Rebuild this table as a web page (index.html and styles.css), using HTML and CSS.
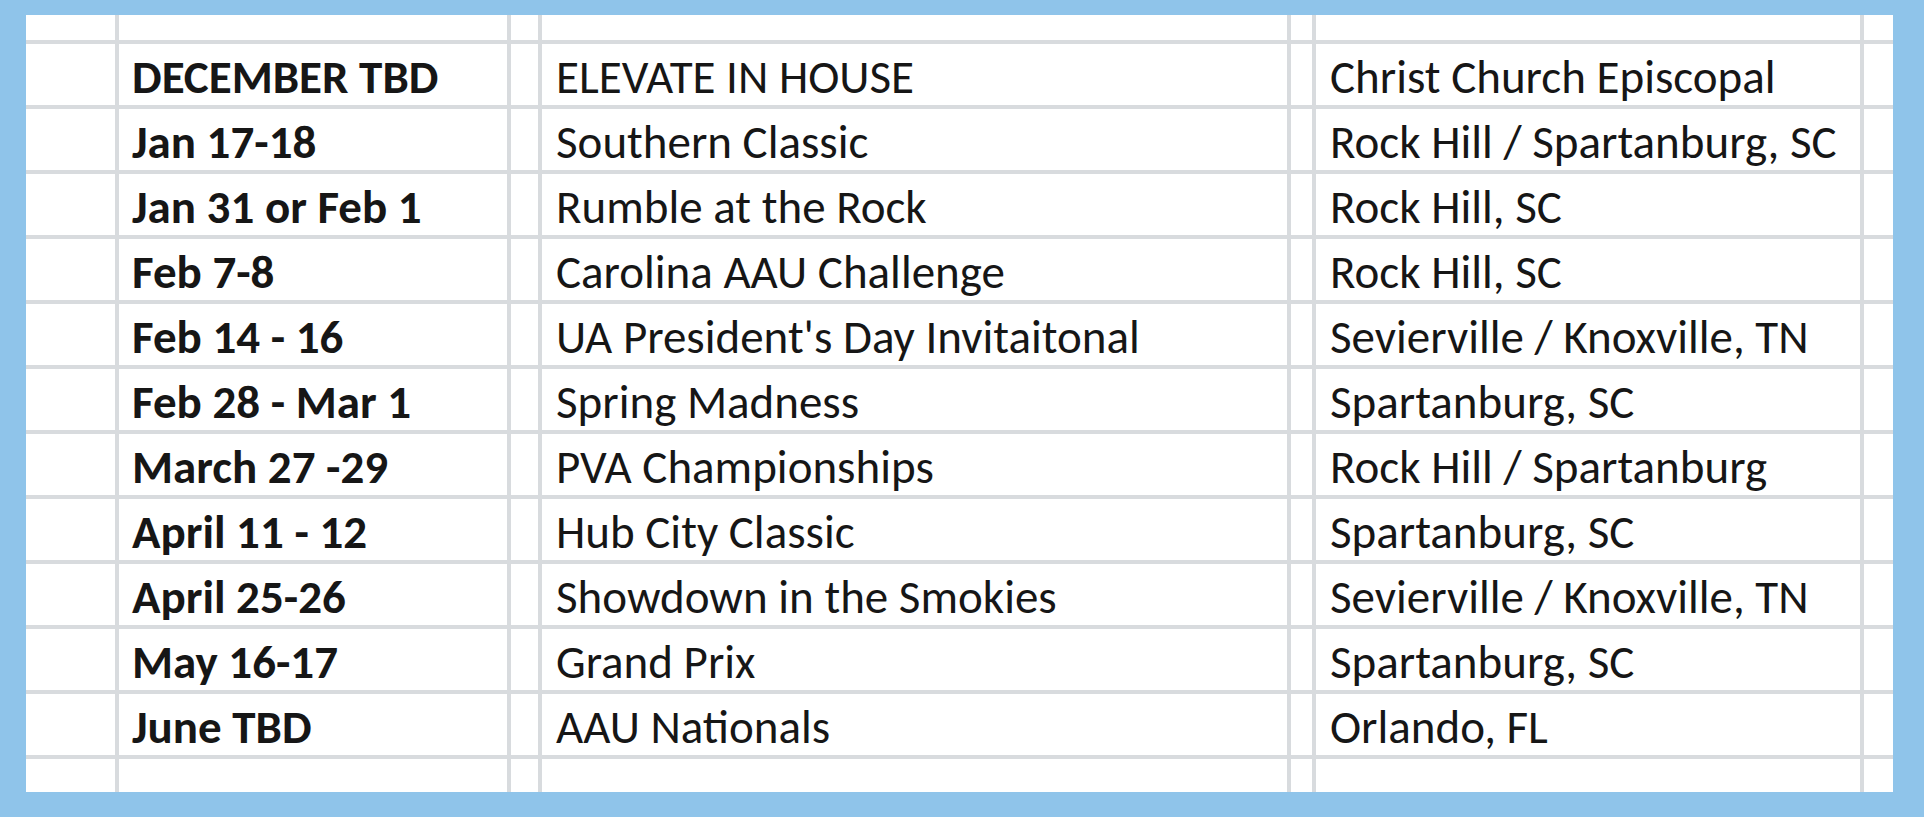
FILE: index.html
```html
<!DOCTYPE html>
<html>
<head>
<meta charset="utf-8">
<link rel="stylesheet" href="styles.css">
</head>
<body>
<div class="frame">
  <div class="sheet">
    <div class="c"></div><div class="c"></div><div class="c"></div><div class="c"></div><div class="c"></div><div class="c"></div><div class="c"></div>

    <div class="c"></div><div class="c date">DECEMBER TBD</div><div class="c"></div><div class="c txt">ELEVATE IN HOUSE</div><div class="c"></div><div class="c txt">Christ Church Episcopal</div><div class="c"></div>
    <div class="c"></div><div class="c date">Jan 17-18</div><div class="c"></div><div class="c txt">Southern Classic</div><div class="c"></div><div class="c txt">Rock Hill / Spartanburg, SC</div><div class="c"></div>
    <div class="c"></div><div class="c date">Jan 31 or Feb 1</div><div class="c"></div><div class="c txt">Rumble at the Rock</div><div class="c"></div><div class="c txt">Rock Hill, SC</div><div class="c"></div>
    <div class="c"></div><div class="c date">Feb 7-8</div><div class="c"></div><div class="c txt">Carolina AAU Challenge</div><div class="c"></div><div class="c txt">Rock Hill, SC</div><div class="c"></div>
    <div class="c"></div><div class="c date">Feb 14 - 16</div><div class="c"></div><div class="c txt">UA President's Day Invitaitonal</div><div class="c"></div><div class="c txt">Sevierville / Knoxville, TN</div><div class="c"></div>
    <div class="c"></div><div class="c date">Feb 28 - Mar 1</div><div class="c"></div><div class="c txt">Spring Madness</div><div class="c"></div><div class="c txt">Spartanburg, SC</div><div class="c"></div>
    <div class="c"></div><div class="c date">March 27 -29</div><div class="c"></div><div class="c txt">PVA Championships</div><div class="c"></div><div class="c txt">Rock Hill / Spartanburg</div><div class="c"></div>
    <div class="c"></div><div class="c date">April 11 - 12</div><div class="c"></div><div class="c txt">Hub City Classic</div><div class="c"></div><div class="c txt">Spartanburg, SC</div><div class="c"></div>
    <div class="c"></div><div class="c date">April 25-26</div><div class="c"></div><div class="c txt">Showdown in the Smokies</div><div class="c"></div><div class="c txt">Sevierville / Knoxville, TN</div><div class="c"></div>
    <div class="c"></div><div class="c date">May 16-17</div><div class="c"></div><div class="c txt">Grand Prix</div><div class="c"></div><div class="c txt">Spartanburg, SC</div><div class="c"></div>
    <div class="c"></div><div class="c date">June TBD</div><div class="c"></div><div class="c txt">AAU Nationals</div><div class="c"></div><div class="c txt">Orlando, FL</div><div class="c"></div>

    <div class="c"></div><div class="c"></div><div class="c"></div><div class="c"></div><div class="c"></div><div class="c"></div><div class="c"></div>
  </div>
</div>
</body>
</html>
```

FILE: styles.css
```css
html, body {
  margin: 0;
  padding: 0;
  background: #8fc4ea;
}

.frame {
  width: 1924px;
  height: 817px;
  box-sizing: border-box;
  padding: 15px 31px 25px 26px;
}

.sheet {
  display: grid;
  grid-template-columns: 89px 388px 27px 745px 21px 544px 29px;
  grid-template-rows: 25px repeat(11, 61px) 33px;
  gap: 4px;
  background: #d8dbde;
  width: 1867px;
  height: 777px;
  font-family: Carlito, Calibri, "Open Sans", sans-serif;
  font-size: 47px;
  color: #161616;
}

.c {
  background: #ffffff;
  overflow: hidden;
  white-space: nowrap;
}

.date {
  font-weight: bold;
  padding: 6px 0 0 13px;
  line-height: 55px;
}

.txt {
  padding: 6px 0 0 14px;
  line-height: 55px;
}
```
